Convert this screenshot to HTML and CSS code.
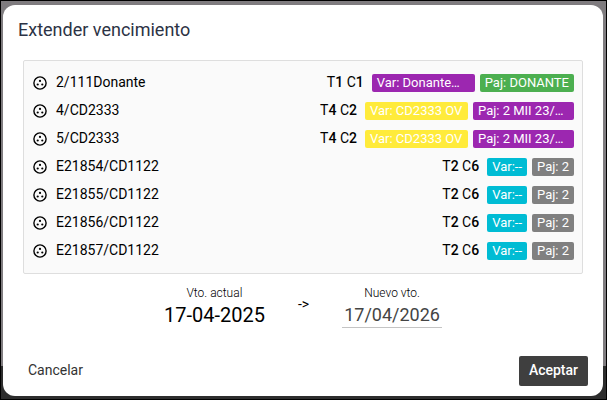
FILE: index.html
```html
<!DOCTYPE html>
<html lang="es">
<head>
    <meta charset="UTF-8">
    <meta name="viewport" content="width=device-width, initial-scale=1.0">
    <title>Extender vencimiento</title>
    <link rel="stylesheet" href="styles.css">
</head>
<body>
    <svg class="sprite" aria-hidden="true">
        <symbol id="straw" viewBox="0 0 14 14">
            <circle cx="7" cy="7" r="6.1" fill="none" stroke="currentColor" stroke-width="1.4"/>
            <circle cx="7" cy="4.9" r="1.1"/>
            <circle cx="4.7" cy="8.5" r="1.1"/>
            <circle cx="9.3" cy="8.5" r="1.1"/>
        </symbol>
    </svg>
    <div class="backdrop">
        <form class="modal" role="dialog" aria-labelledby="title">
            <h1 class="modal-title" id="title">Extender vencimiento</h1>
            <ul class="list">
                <li class="row">
                    <svg class="icon"><use href="#straw"/></svg>
                    <span class="name">2/111Donante</span>
                    <span class="place">T<b>1</b> C<b>1</b></span>
                    <span class="badge wide purple">Var: Donante…</span>
                    <span class="badge green">Paj: DONANTE</span>
                </li>
                <li class="row">
                    <svg class="icon"><use href="#straw"/></svg>
                    <span class="name">4/CD2333</span>
                    <span class="place">T<b>4</b> C<b>2</b></span>
                    <span class="badge wide yellow">Var: CD2333 OV</span>
                    <span class="badge medium purple">Paj: 2 MII 23/…</span>
                </li>
                <li class="row">
                    <svg class="icon"><use href="#straw"/></svg>
                    <span class="name">5/CD2333</span>
                    <span class="place">T<b>4</b> C<b>2</b></span>
                    <span class="badge wide yellow">Var: CD2333 OV</span>
                    <span class="badge medium purple">Paj: 2 MII 23/…</span>
                </li>
                <li class="row">
                    <svg class="icon"><use href="#straw"/></svg>
                    <span class="name">E21854/CD1122</span>
                    <span class="place">T<b>2</b> C<b>6</b></span>
                    <span class="badge cyan">Var:--</span>
                    <span class="badge gray">Paj: 2</span>
                </li>
                <li class="row">
                    <svg class="icon"><use href="#straw"/></svg>
                    <span class="name">E21855/CD1122</span>
                    <span class="place">T<b>2</b> C<b>6</b></span>
                    <span class="badge cyan">Var:--</span>
                    <span class="badge gray">Paj: 2</span>
                </li>
                <li class="row">
                    <svg class="icon"><use href="#straw"/></svg>
                    <span class="name">E21856/CD1122</span>
                    <span class="place">T<b>2</b> C<b>6</b></span>
                    <span class="badge cyan">Var:--</span>
                    <span class="badge gray">Paj: 2</span>
                </li>
                <li class="row">
                    <svg class="icon"><use href="#straw"/></svg>
                    <span class="name">E21857/CD1122</span>
                    <span class="place">T<b>2</b> C<b>6</b></span>
                    <span class="badge cyan">Var:--</span>
                    <span class="badge gray">Paj: 2</span>
                </li>
            </ul>
            <div class="dates">
                <div class="date">
                    <span class="date-label">Vto. actual</span>
                    <span class="date-value">17-04-2025</span>
                </div>
                <span class="arrow">-&gt;</span>
                <div class="date">
                    <label class="date-label" for="nuevo">Nuevo vto.</label>
                    <input class="date-input" id="nuevo" type="text" value="17/04/2026">
                </div>
            </div>
            <div class="actions">
                <button class="btn" type="button">Cancelar</button>
                <button class="btn primary" type="submit">Aceptar</button>
            </div>
        </form>
    </div>
</body>
</html>
```
FILE: styles.css
```css
* {
    box-sizing: border-box;
}
body {
    margin: 0;
    font-family: Roboto, "Liberation Sans", sans-serif;
    font-size: 14px;
    color: #000000;
}
.sprite {
    display: none;
}
.backdrop {
    min-height: 100vh;
    padding: 4px 3px 3px 2px;
    border: 1px solid #000000;
    background: linear-gradient(#7f7c7f calc(100% - 33px), #2d2d2d calc(100% - 33px));
    display: flex;
}
.modal {
    flex: 1;
    display: flex;
    flex-direction: column;
    padding: 12px 15px 10px;
    border-radius: 12px;
    background: #ffffff;
}
.modal-title {
    margin: 0 0 17px;
    font-size: 18px;
    line-height: 26px;
    font-weight: 400;
    color: #2c3345;
}
.list {
    list-style: none;
    margin: 0 5px;
    padding: 8px;
    border: 1px solid #dedede;
    border-radius: 2px;
    background: #fafafa;
}
.row {
    display: flex;
    align-items: center;
    height: 28px;
}
.icon {
    width: 14px;
    height: 14px;
    margin: 0 9px 0 1px;
}
.name {
    flex: 1;
}
.name, .place {
    padding-bottom: 2px;
}
.place b {
    font-weight: 500;
}
.badge {
    height: 18px;
    margin-left: 5px;
    padding: 0 5px;
    border-radius: 2px;
    font-size: 13px;
    line-height: 18px;
    color: #ffffff;
    white-space: nowrap;
    overflow: hidden;
    text-overflow: ellipsis;
}
.place + .badge {
    margin-left: 8px;
}
.wide {
    min-width: 103px;
}
.medium {
    min-width: 101px;
}
.purple {
    background: #9c27b0;
}
.green {
    background: #4caf50;
}
.yellow {
    background: #ffeb3b;
}
.cyan {
    background: #00bcd4;
}
.gray {
    background: #808080;
}
.dates {
    display: flex;
    justify-content: center;
    align-items: center;
    gap: 33px;
    margin-top: 10px;
}
.date {
    display: flex;
    flex-direction: column;
    align-items: center;
}
.date-label {
    font-size: 12px;
    line-height: 18px;
    font-weight: 300;
}
.date-value {
    font-size: 20px;
    line-height: 26px;
}
.arrow {
    padding-bottom: 4px;
}
.date-input {
    width: 100px;
    height: 26px;
    padding: 0;
    border: 0;
    border-bottom: 1px solid #c4c4c4;
    background: none;
    font: inherit;
    font-size: 18px;
    text-align: center;
    color: #444444;
}
.actions {
    display: flex;
    justify-content: space-between;
    margin-top: auto;
}
.btn {
    height: 30px;
    padding: 0 10px 2px;
    border: 0;
    border-radius: 2px;
    background: none;
    font: inherit;
    color: #333333;
}
.primary {
    background: #3f3f3f;
    font-weight: 500;
    color: #ffffff;
}
```
